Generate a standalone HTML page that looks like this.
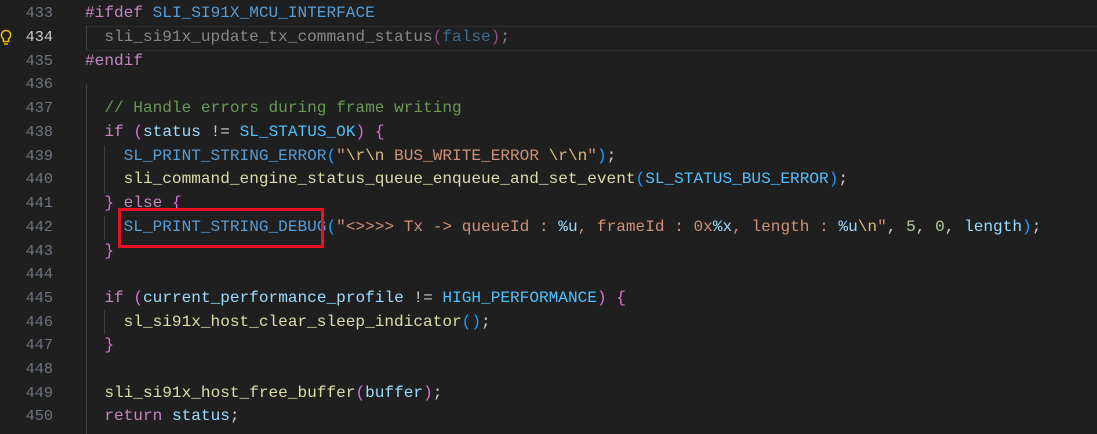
<!DOCTYPE html>
<html><head><style>
html,body{margin:0;padding:0;background:#1f1f1f;width:1097px;height:434px;overflow:hidden}
.l{position:absolute;left:0;height:23.7px;line-height:23.7px;font-family:"Liberation Mono",monospace;font-size:16.1px;white-space:pre;width:1097px}
.n{position:absolute;right:1044px;color:#6e7681;text-align:right;font-size:15.2px}
.c{position:absolute;left:85px;color:#cccccc}
.pp{color:#c586c0}.m{color:#569cd6}.f{color:#dcdcaa}.v{color:#9cdcfe}.s{color:#ce9178}.cm{color:#6a9955}.k{color:#c586c0}.cn{color:#4fc1ff}.nu{color:#b5cea8}
.p1{color:#da70d6}.p2{color:#179fff}.e{color:#d7ba7d}
.g{position:absolute;width:1px;background:#404040}
</style></head><body>
<div style="position:absolute;left:85px;top:26px;width:1012px;height:23px;border-top:1px solid #2c2c2c;border-bottom:1px solid #2c2c2c"></div>
<div class="g" style="left:86px;top:26px;height:24px"></div>
<div class="g" style="left:86px;top:84px;height:350px"></div>
<div class="g" style="left:104px;top:145px;height:48px"></div>
<div class="g" style="left:104px;top:216px;height:24px"></div>
<div class="g" style="left:104px;top:310px;height:24px"></div>
<svg style="position:absolute;left:0;top:29px" width="12" height="18" viewBox="0 0 12 18"><path d="M6 1.5a4.5 4.5 0 0 0-2.6 8.2v2.8h5.2V9.7A4.5 4.5 0 0 0 6 1.5z" fill="none" stroke="#e6c300" stroke-width="1.5"/><path d="M4 15h4" stroke="#e6c300" stroke-width="1.5"/></svg>
<div class="l" style="top:2px"><span class="n">433</span><span class="c"><span class="pp">#ifdef</span> <span class="m">SLI_SI91X_MCU_INTERFACE</span></span></div>
<div class="l" style="top:26px"><span class="n" style="color:#cccccc">434</span><span class="c" style="opacity:.6">  sli_si91x_update_tx_command_status<span class="p1">(</span><span class="m">false</span><span class="p1">)</span>;</span></div>
<div class="l" style="top:50px"><span class="n">435</span><span class="c"><span class="pp">#endif</span></span></div>
<div class="l" style="top:73px"><span class="n">436</span></div>
<div class="l" style="top:97px"><span class="n">437</span><span class="c">  <span class="cm">// Handle errors during frame writing</span></span></div>
<div class="l" style="top:121px"><span class="n">438</span><span class="c">  <span class="k">if</span> <span class="p1">(</span><span class="v">status</span> != <span class="cn">SL_STATUS_OK</span><span class="p1">)</span> <span class="p1">{</span></span></div>
<div class="l" style="top:145px"><span class="n">439</span><span class="c">    <span class="m">SL_PRINT_STRING_ERROR</span><span class="p2">(</span><span class="s">"<span class="e">\r\n</span> BUS_WRITE_ERROR <span class="e">\r\n</span>"</span><span class="p2">)</span>;</span></div>
<div class="l" style="top:168px"><span class="n">440</span><span class="c">    <span class="f">sli_command_engine_status_queue_enqueue_and_set_event</span><span class="p2">(</span><span class="cn">SL_STATUS_BUS_ERROR</span><span class="p2">)</span>;</span></div>
<div class="l" style="top:192px"><span class="n">441</span><span class="c">  <span class="p1">}</span> <span class="k">else</span> <span class="p1">{</span></span></div>
<div class="l" style="top:216px"><span class="n">442</span><span class="c">    <span class="m">SL_PRINT_STRING_DEBUG</span><span class="p2">(</span><span class="s">"&lt;&gt;&gt;&gt;&gt; Tx -&gt; queueId : <span class="v">%u</span>, frameId : 0x<span class="v">%x</span>, length : <span class="v">%u</span><span class="e">\n</span>"</span>, <span class="nu">5</span>, <span class="nu">0</span>, <span class="v">length</span><span class="p2">)</span>;</span></div>
<div class="l" style="top:240px"><span class="n">443</span><span class="c">  <span class="p1">}</span></span></div>
<div class="l" style="top:263px"><span class="n">444</span></div>
<div class="l" style="top:287px"><span class="n">445</span><span class="c">  <span class="k">if</span> <span class="p1">(</span><span class="v">current_performance_profile</span> != <span class="cn">HIGH_PERFORMANCE</span><span class="p1">)</span> <span class="p1">{</span></span></div>
<div class="l" style="top:311px"><span class="n">446</span><span class="c">    <span class="f">sl_si91x_host_clear_sleep_indicator</span><span class="p2">()</span>;</span></div>
<div class="l" style="top:334px"><span class="n">447</span><span class="c">  <span class="p1">}</span></span></div>
<div class="l" style="top:358px"><span class="n">448</span></div>
<div class="l" style="top:382px"><span class="n">449</span><span class="c">  <span class="f">sli_si91x_host_free_buffer</span><span class="p1">(</span><span class="v">buffer</span><span class="p1">)</span>;</span></div>
<div class="l" style="top:405px"><span class="n">450</span><span class="c">  <span class="k">return</span> <span class="v">status</span>;</span></div>
<div style="position:absolute;left:118px;top:208px;width:200px;height:34px;border:3px solid #e81123"></div>
</body></html>
